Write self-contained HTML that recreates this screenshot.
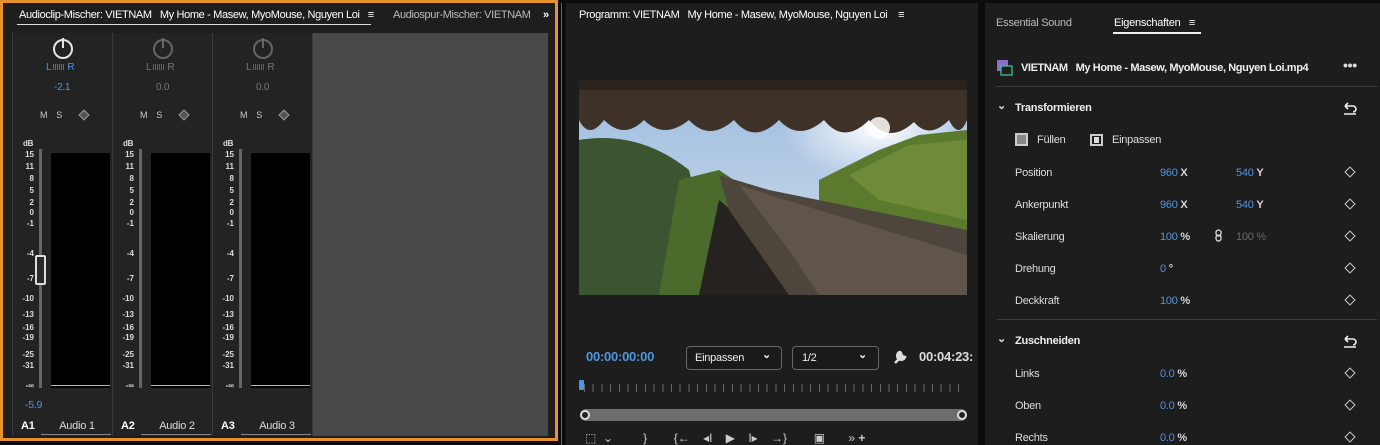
<!DOCTYPE html>
<html><head><meta charset="utf-8"><style>
*{margin:0;padding:0;box-sizing:border-box}
body{width:1380px;height:445px;background:#0c0c0c;font-family:"Liberation Sans",sans-serif;position:relative;overflow:hidden;color:#d4d4d4}
.a{position:absolute;white-space:nowrap}
.t{position:absolute;white-space:nowrap;font-size:11px;line-height:14px;letter-spacing:-0.25px}
.strip{position:absolute;top:33px;width:100px;height:403px;background:#232323;border-right:1px solid #3a3a3a}
.lbl{position:absolute;right:78px;font-size:8px;line-height:8px;color:#ddd;text-align:right;font-weight:bold}
.blue{color:#4f96e0}
.dia{position:absolute;width:8px;height:8px;border:1.3px solid #ddd;transform:rotate(45deg)}
.bars{display:inline-block;width:12px;height:6px;margin:0 2px;background:repeating-linear-gradient(90deg,currentColor 0 1px,transparent 1px 2px);opacity:.7}
</style></head><body>

<!-- LEFT PANEL -->
<div class="a" style="left:0;top:0;width:558px;height:441px;border:3px solid #e8922c;background:#1e1e1e"></div>
<div class="t" style="left:19px;top:8px;font-size:11px;letter-spacing:-0.35px;color:#fff">Audioclip-Mischer: VIETNAM&nbsp;&nbsp;&nbsp;My Home - Masew, MyoMouse, Nguyen Loi&nbsp;&nbsp;&nbsp;≡</div>
<div class="a" style="left:17px;top:24px;width:354px;height:1px;background:#ddd"></div>
<div class="t" style="left:393px;top:8px;font-size:11px;letter-spacing:-0.35px;color:#bbb;width:144px;overflow:hidden">Audiospur-Mischer: VIETNAM</div>
<div class="t" style="left:543px;top:8px;font-size:11px;color:#fff;font-weight:bold">»</div>
<div class="a" style="left:313px;top:33px;width:235px;height:403px;background:#484848"></div>
<div class="a" style="left:12px;top:32px;width:1px;height:404px;background:#3a3a3a"></div>

<div class="strip" style="left:13px">
 <div class="a" style="left:40px;top:6px;width:20px;height:20px;border:2px solid #e6e6e6;border-radius:50%"></div><div class="a" style="left:49px;top:5px;width:2px;height:10px;background:#e6e6e6"></div>
 <div class="t blue" style="left:33px;top:28px;font-size:10px">L<span class="bars"></span>R</div>
 <div class="t blue" style="left:41px;top:48px;font-size:10px">-2.1</div>
 <div class="t" style="left:27px;top:75px;font-size:9px;color:#ccc">M&nbsp;&nbsp;&nbsp;&nbsp;S</div><div class="dia" style="left:67px;top:78px;border-color:#999;background:#555"></div>
 <div class="t" style="left:10px;top:104px;font-size:8px;font-weight:bold;color:#ddd">dB</div>
 <div class="a" style="left:26px;top:116px;width:3px;height:239px;background:#666"></div>
 <div class="a" style="left:38px;top:120px;width:59px;height:235px;background:#000"></div>
 <div class="a" style="left:38px;top:352px;width:59px;height:1px;background:#d8c600"></div>
 <div class="lbl" style="top:118px">15</div><div class="lbl" style="top:130px">11</div><div class="lbl" style="top:142px">8</div><div class="lbl" style="top:154px">5</div><div class="lbl" style="top:166px">2</div><div class="lbl" style="top:176px">0</div><div class="lbl" style="top:187px">-1</div><div class="lbl" style="top:217px">-4</div><div class="lbl" style="top:242px">-7</div><div class="lbl" style="top:262px">-10</div><div class="lbl" style="top:278px">-13</div><div class="lbl" style="top:291px">-16</div><div class="lbl" style="top:301px">-19</div><div class="lbl" style="top:318px">-25</div><div class="lbl" style="top:329px">-31</div><div class="lbl" style="top:349px">-∞</div>
 <div class="a" style="left:22px;top:222px;width:11px;height:30px;border:2px solid #ddd;border-radius:2px;background:#2a2a2a"></div>
 <div class="t blue" style="left:12px;top:365px;font-size:10.5px">-5.9</div>
 <div class="t" style="left:8px;top:386px;font-weight:bold;color:#fff">A1</div>
 <div class="t" style="left:32px;top:386px;color:#ddd;width:64px;text-align:center">Audio 1</div>
 <div class="a" style="left:28px;top:401px;width:70px;height:1px;background:#888"></div>
</div>
<div class="strip" style="left:113px">
 <div class="a" style="left:40px;top:6px;width:20px;height:20px;border:2px solid #666;border-radius:50%"></div><div class="a" style="left:49px;top:5px;width:2px;height:10px;background:#666"></div>
 <div class="t" style="left:33px;top:28px;font-size:10px;color:#777">L<span class="bars"></span>R</div>
 <div class="t" style="left:43px;top:48px;font-size:10px;color:#777">0.0</div>
 <div class="t" style="left:27px;top:75px;font-size:9px;color:#ccc">M&nbsp;&nbsp;&nbsp;&nbsp;S</div><div class="dia" style="left:67px;top:78px;border-color:#999;background:#555"></div>
 <div class="t" style="left:10px;top:104px;font-size:8px;font-weight:bold;color:#ddd">dB</div>
 <div class="a" style="left:26px;top:116px;width:3px;height:239px;background:#666"></div>
 <div class="a" style="left:38px;top:120px;width:59px;height:235px;background:#000"></div>
 <div class="a" style="left:38px;top:352px;width:59px;height:1px;background:#d8c600"></div>
 <div class="lbl" style="top:118px">15</div><div class="lbl" style="top:130px">11</div><div class="lbl" style="top:142px">8</div><div class="lbl" style="top:154px">5</div><div class="lbl" style="top:166px">2</div><div class="lbl" style="top:176px">0</div><div class="lbl" style="top:187px">-1</div><div class="lbl" style="top:217px">-4</div><div class="lbl" style="top:242px">-7</div><div class="lbl" style="top:262px">-10</div><div class="lbl" style="top:278px">-13</div><div class="lbl" style="top:291px">-16</div><div class="lbl" style="top:301px">-19</div><div class="lbl" style="top:318px">-25</div><div class="lbl" style="top:329px">-31</div><div class="lbl" style="top:349px">-∞</div>
 <div class="t" style="left:8px;top:386px;font-weight:bold;color:#fff">A2</div>
 <div class="t" style="left:32px;top:386px;color:#ddd;width:64px;text-align:center">Audio 2</div>
 <div class="a" style="left:28px;top:401px;width:70px;height:1px;background:#888"></div>
</div>
<div class="strip" style="left:213px">
 <div class="a" style="left:40px;top:6px;width:20px;height:20px;border:2px solid #666;border-radius:50%"></div><div class="a" style="left:49px;top:5px;width:2px;height:10px;background:#666"></div>
 <div class="t" style="left:33px;top:28px;font-size:10px;color:#777">L<span class="bars"></span>R</div>
 <div class="t" style="left:43px;top:48px;font-size:10px;color:#777">0.0</div>
 <div class="t" style="left:27px;top:75px;font-size:9px;color:#ccc">M&nbsp;&nbsp;&nbsp;&nbsp;S</div><div class="dia" style="left:67px;top:78px;border-color:#999;background:#555"></div>
 <div class="t" style="left:10px;top:104px;font-size:8px;font-weight:bold;color:#ddd">dB</div>
 <div class="a" style="left:26px;top:116px;width:3px;height:239px;background:#666"></div>
 <div class="a" style="left:38px;top:120px;width:59px;height:235px;background:#000"></div>
 <div class="a" style="left:38px;top:352px;width:59px;height:1px;background:#d8c600"></div>
 <div class="lbl" style="top:118px">15</div><div class="lbl" style="top:130px">11</div><div class="lbl" style="top:142px">8</div><div class="lbl" style="top:154px">5</div><div class="lbl" style="top:166px">2</div><div class="lbl" style="top:176px">0</div><div class="lbl" style="top:187px">-1</div><div class="lbl" style="top:217px">-4</div><div class="lbl" style="top:242px">-7</div><div class="lbl" style="top:262px">-10</div><div class="lbl" style="top:278px">-13</div><div class="lbl" style="top:291px">-16</div><div class="lbl" style="top:301px">-19</div><div class="lbl" style="top:318px">-25</div><div class="lbl" style="top:329px">-31</div><div class="lbl" style="top:349px">-∞</div>
 <div class="t" style="left:8px;top:386px;font-weight:bold;color:#fff">A3</div>
 <div class="t" style="left:32px;top:386px;color:#ddd;width:64px;text-align:center">Audio 3</div>
 <div class="a" style="left:28px;top:401px;width:70px;height:1px;background:#888"></div>
</div>

<!-- MIDDLE PANEL -->
<div class="a" style="left:561px;top:3px;width:1px;height:442px;background:#2f6db8"></div>
<div class="a" style="left:566px;top:3px;width:412px;height:442px;background:#1d1d1d"></div>
<div class="t" style="left:579px;top:8px;font-size:11px;letter-spacing:-0.35px;color:#fff">Programm: VIETNAM&nbsp;&nbsp;&nbsp;My Home - Masew, MyoMouse, Nguyen Loi&nbsp;&nbsp;&nbsp;&nbsp;≡</div>
<svg class="a" style="left:579px;top:80px" width="388" height="215" viewBox="0 0 388 215">
 <defs><linearGradient id="sky" x1="0" y1="0" x2="0" y2="1"><stop offset="0" stop-color="#9bbbe0"/><stop offset="1" stop-color="#d5e0ea"/></linearGradient>
 <radialGradient id="sun" cx="0.77" cy="0.22" r="0.25"><stop offset="0" stop-color="#fff"/><stop offset="1" stop-color="#fff" stop-opacity="0"/></radialGradient></defs>
 <rect width="388" height="215" fill="url(#sky)"/>
 <rect width="388" height="215" fill="url(#sun)"/>
 <path d="M240 100 L300 70 L340 55 L388 50 L388 215 L240 215Z" fill="#5b7a2e"/>
 <path d="M270 95 L330 65 L388 60 L388 140 L300 120Z" fill="#6f8a38"/>
 <path d="M0 60 Q60 50 110 90 L140 215 L0 215Z" fill="#3a5530"/>
 <path d="M100 100 L140 90 L170 110 L150 215 L80 215Z" fill="#4a6b2c"/>
 <path d="M120 215 L140 120 L200 170 L220 215Z" fill="#252220"/>
 <path d="M140 95 L190 110 L388 150 L388 215 L210 215 L150 130Z" fill="#4e463d"/>
 <path d="M160 105 L200 118 L388 175 L388 215 L240 215 L210 170Z" fill="#5f554a"/>
 <path d="M0 0 H388 V40 Q380 60 370 40 Q350 60 335 42 Q310 65 290 40 Q265 65 245 40 Q220 62 200 40 Q175 65 155 40 Q130 62 110 40 Q85 60 65 40 Q45 60 25 40 Q10 60 0 40Z" fill="#3e3128"/>
 <rect x="0" y="0" width="388" height="10" fill="#2a221c"/>
 <circle cx="300" cy="48" r="11" fill="#fff" opacity=".85"/>
</svg>
<div class="t blue" style="left:586px;top:350px;font-size:13px;font-weight:bold">00:00:00:00</div>
<div class="a" style="left:686px;top:346px;width:96px;height:24px;border:1px solid #666;border-radius:4px;background:#1a1a1a"></div>
<div class="t" style="left:695px;top:351px;color:#eee">Einpassen</div><div class="t" style="left:762px;top:348px;color:#eee;font-weight:bold">⌄</div>
<div class="a" style="left:792px;top:346px;width:87px;height:24px;border:1px solid #666;border-radius:4px;background:#1a1a1a"></div>
<div class="t" style="left:802px;top:351px;color:#eee">1/2</div><div class="t" style="left:858px;top:348px;color:#eee;font-weight:bold">⌄</div>
<svg class="a" style="left:892px;top:349px" width="16" height="16"><path d="M3 14 L9 8 M8 3 a4 4 0 1 0 5 5 l-3-1 -1-3z" stroke="#ddd" stroke-width="2.5" fill="#ddd"/></svg>
<div class="t" style="left:919px;top:350px;font-size:13px;font-weight:bold;color:#ddd">00:04:23:</div>
<div class="a" style="left:579px;top:380px;width:5px;height:10px;background:#4f96e0;border-radius:1px"></div>
<div class="a" style="left:584px;top:384px;width:383px;height:8px;background:repeating-linear-gradient(90deg,#666 0 1px,transparent 1px 8.7px)"></div>
<div class="a" style="left:580px;top:409px;width:387px;height:12px;background:#6d6d6d;border-radius:6px"></div>
<div class="a" style="left:580px;top:410px;width:10px;height:10px;border-radius:50%;background:#222;border:2px solid #ddd"></div>
<div class="a" style="left:957px;top:410px;width:10px;height:10px;border-radius:50%;background:#222;border:2px solid #ddd"></div>
<div class="t" style="left:585px;top:431px;font-size:12px;color:#ccc;letter-spacing:0">⬚&nbsp;&nbsp;⌄&nbsp;&nbsp;&nbsp;&nbsp;&nbsp;&nbsp;&nbsp;&nbsp;&nbsp;}&nbsp;&nbsp;&nbsp;&nbsp;&nbsp;&nbsp;&nbsp;&nbsp;{←&nbsp;&nbsp;&nbsp;&nbsp;◂I&nbsp;&nbsp;&nbsp;&nbsp;▶&nbsp;&nbsp;&nbsp;&nbsp;I▸&nbsp;&nbsp;&nbsp;&nbsp;→}&nbsp;&nbsp;&nbsp;&nbsp;&nbsp;&nbsp;&nbsp;&nbsp;▣&nbsp;&nbsp;&nbsp;&nbsp;&nbsp;&nbsp;&nbsp;»&nbsp;<b>+</b></div>

<!-- RIGHT PANEL -->
<div class="a" style="left:985px;top:3px;width:395px;height:442px;background:#1d1d1d"></div>
<div class="t" style="left:996px;top:16px;font-size:11px;color:#bbb">Essential Sound</div>
<div class="t" style="left:1114px;top:16px;font-size:11px;color:#fff">Eigenschaften&nbsp;&nbsp;&nbsp;≡</div>
<div class="a" style="left:1113px;top:32px;width:88px;height:2px;background:#eee"></div>
<svg class="a" style="left:997px;top:60px" width="16" height="16"><rect x="0" y="0" width="11" height="11" fill="#8a6fc8"/><rect x="4" y="6" width="11" height="9" fill="#1d1d1d" stroke="#3fc09a" stroke-width="1.3"/></svg>
<div class="t" style="left:1021px;top:61px;font-size:11px;letter-spacing:-0.4px;font-weight:bold;color:#eee">VIETNAM&nbsp;&nbsp;&nbsp;My Home - Masew, MyoMouse, Nguyen Loi.mp4</div>
<div class="t" style="left:1343px;top:58px;font-size:14px;font-weight:bold;color:#ddd">•••</div>
<div class="a" style="left:995px;top:86px;width:382px;height:1px;background:#3c3c3c"></div>
<div class="t" style="left:997px;top:99px;font-size:11px;color:#ddd;font-weight:bold">⌄</div>
<div class="t" style="left:1015px;top:101px;font-weight:bold;color:#eee">Transformieren</div>
<svg class="a" style="left:1343px;top:101px" width="15" height="14"><path d="M2 5 H10 a3 3 0 0 1 0 6 M2 5 l3-3 M2 5 l3 3 M1 13 H13" stroke="#eee" stroke-width="1.6" fill="none"/></svg>
<div class="a" style="left:1015px;top:133px;width:13px;height:13px;border:2px solid #ccc;background:#888"></div>
<div class="t" style="left:1037px;top:133px;color:#ddd">Füllen</div>
<div class="a" style="left:1090px;top:134px;width:13px;height:12px;border:2px solid #ccc"></div><div class="a" style="left:1094px;top:137px;width:5px;height:6px;background:#ddd"></div>
<div class="t" style="left:1112px;top:133px;color:#ddd">Einpassen</div>

<div class="t" style="left:1015px;top:166px;color:#ddd">Position</div><div class="t" style="left:1160px;top:166px"><span class="blue">960</span> <b>X</b></div><div class="t" style="left:1236px;top:166px"><span class="blue">540</span> <b>Y</b></div>
<div class="t" style="left:1015px;top:198px;color:#ddd">Ankerpunkt</div><div class="t" style="left:1160px;top:198px"><span class="blue">960</span> <b>X</b></div><div class="t" style="left:1236px;top:198px"><span class="blue">540</span> <b>Y</b></div>
<div class="t" style="left:1015px;top:230px;color:#ddd">Skalierung</div><div class="t" style="left:1160px;top:230px"><span class="blue">100</span> <b>%</b></div>
<svg class="a" style="left:1215px;top:229px" width="8" height="14"><rect x="1" y="1" width="5" height="6" rx="2.5" stroke="#ddd" stroke-width="1.3" fill="none"/><rect x="1" y="6" width="5" height="6" rx="2.5" stroke="#ddd" stroke-width="1.3" fill="none"/></svg>
<div class="t" style="left:1236px;top:230px;color:#666">100 %</div>
<div class="t" style="left:1015px;top:262px;color:#ddd">Drehung</div><div class="t" style="left:1160px;top:262px"><span class="blue">0</span> <b>°</b></div>
<div class="t" style="left:1015px;top:294px;color:#ddd">Deckkraft</div><div class="t" style="left:1160px;top:294px"><span class="blue">100</span> <b>%</b></div>
<div class="dia" style="left:1346px;top:168px;border-color:#ccc"></div>
<div class="dia" style="left:1346px;top:200px;border-color:#ccc"></div>
<div class="dia" style="left:1346px;top:232px;border-color:#ccc"></div>
<div class="dia" style="left:1346px;top:264px;border-color:#ccc"></div>
<div class="dia" style="left:1346px;top:296px;border-color:#ccc"></div>
<div class="a" style="left:997px;top:319px;width:380px;height:1px;background:#3c3c3c"></div>
<div class="t" style="left:997px;top:332px;font-size:11px;color:#ddd;font-weight:bold">⌄</div>
<div class="t" style="left:1015px;top:334px;font-weight:bold;color:#eee">Zuschneiden</div>
<svg class="a" style="left:1343px;top:334px" width="15" height="14"><path d="M2 5 H10 a3 3 0 0 1 0 6 M2 5 l3-3 M2 5 l3 3 M1 13 H13" stroke="#eee" stroke-width="1.6" fill="none"/></svg>
<div class="t" style="left:1015px;top:367px;color:#ddd">Links</div><div class="t" style="left:1160px;top:367px"><span class="blue">0.0</span> <b>%</b></div>
<div class="t" style="left:1015px;top:399px;color:#ddd">Oben</div><div class="t" style="left:1160px;top:399px"><span class="blue">0.0</span> <b>%</b></div>
<div class="t" style="left:1015px;top:431px;color:#ddd">Rechts</div><div class="t" style="left:1160px;top:431px"><span class="blue">0.0</span> <b>%</b></div>
<div class="dia" style="left:1346px;top:369px;border-color:#ccc"></div>
<div class="dia" style="left:1346px;top:401px;border-color:#ccc"></div>
<div class="dia" style="left:1346px;top:433px;border-color:#ccc"></div>
</body></html>
